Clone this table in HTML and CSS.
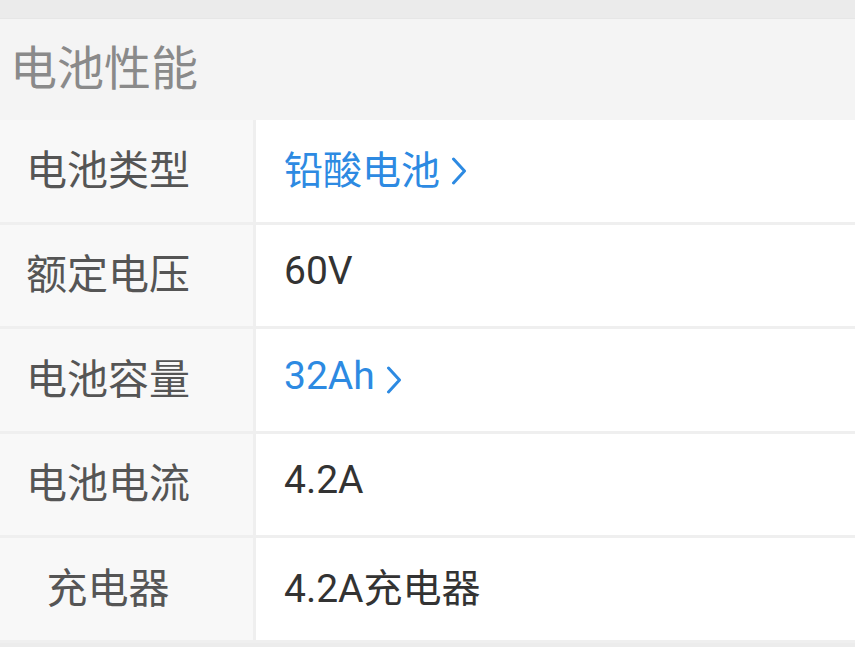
FILE: index.html
```html
<!DOCTYPE html>
<html lang="zh">
<head>
<meta charset="utf-8">
<link rel="stylesheet" href="styles.css">
</head>
<body>
<div class="topbar"></div>
<div class="section-title">电池性能</div>
<div class="table">
  <div class="row">
    <div class="label">电池类型</div>
    <div class="value link">铅酸电池<svg class="chev" viewBox="0 0 16 28"><path d="M2.5 2 L13.5 14 L2.5 26" fill="none" stroke="currentColor" stroke-width="3" stroke-linecap="round" stroke-linejoin="round"/></svg></div>
  </div>
  <div class="row">
    <div class="label">额定电压</div>
    <div class="value">60V</div>
  </div>
  <div class="row">
    <div class="label">电池容量</div>
    <div class="value link">32Ah<svg class="chev" viewBox="0 0 16 28"><path d="M2.5 2 L13.5 14 L2.5 26" fill="none" stroke="currentColor" stroke-width="3" stroke-linecap="round" stroke-linejoin="round"/></svg></div>
  </div>
  <div class="row">
    <div class="label">电池电流</div>
    <div class="value">4.2A</div>
  </div>
  <div class="row">
    <div class="label">充电器</div>
    <div class="value">4.2A充电器</div>
  </div>
</div>
</body>
</html>
```
FILE: styles.css
```css
html, body {
  margin: 0;
  padding: 0;
}
body {
  width: 855px;
  height: 647px;
  overflow: hidden;
  background: #ececec;
  font-family: "Roboto", "Noto Sans CJK SC", sans-serif;
}
.topbar {
  height: 18px;
  background: #ebebeb;
  border-bottom: 1px solid #e6e6e6;
}
.section-title {
  height: 101px;
  background: #f4f4f4;
  color: #8a8a8a;
  font-size: 47px;
  line-height: 100px;
  padding-left: 10px;
}
.table {
  display: flex;
  flex-direction: column;
  background: #efefef;
}
.row {
  display: flex;
  height: 101.5px;
  border-bottom: 3px solid #efefef;
}
.label {
  width: 216px;
  padding-right: 37px;
  background: #f8f8f8;
  border-right: 3px solid #efefef;
  color: #555;
  font-size: 41px;
  display: flex;
  align-items: center;
  justify-content: center;
  padding-bottom: 8px;
  box-sizing: content-box;
}
.value {
  flex: 1;
  background: #fff;
  color: #333;
  font-size: 39px;
  display: flex;
  align-items: center;
  padding-left: 28px;
  padding-bottom: 8px;
}
.link {
  color: #2d8ae2;
}
.chev {
  width: 16px;
  height: 28px;
  margin-left: 11px;
  margin-top: 8px;
}
```
